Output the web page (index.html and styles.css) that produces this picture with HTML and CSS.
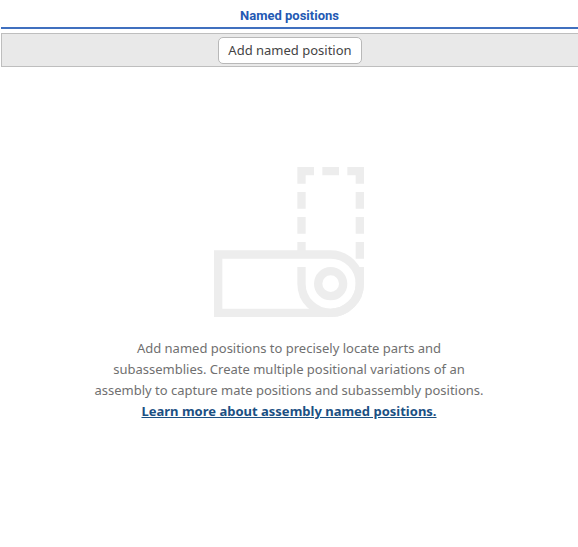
FILE: index.html
```html
<!DOCTYPE html>
<html lang="en">
<head>
<meta charset="utf-8">
<meta name="viewport" content="width=device-width, initial-scale=1">
<title>Named positions</title>
<link rel="stylesheet" href="styles.css">
</head>
<body>
<main class="panel">
  <h1 class="panel-title">Named positions</h1>
  <div class="toolbar">
    <button type="button" class="add-button">Add named position</button>
  </div>
  <section class="empty-state">
    <svg class="empty-icon" viewBox="0 0 18 18" fill="none" stroke="currentColor" aria-hidden="true">
      <path d="M10.5 2V.5H12M13 .5h2M16 .5h1.500V2M10.500 3v2M10.500 6v2M10.500 9v1.500M17.500 3v2M17.500 6v2M17.500 9v2"/>
      <path d="M14 10.500H.5v7H14a3.500 3.500 0 0 0 0-7z"/>
      <path d="M10.500 12v2a3.500 3.500 0 0 0 7 0v-2"/>
      <circle cx="14" cy="14" r="1.500"/>
    </svg>
    <p class="empty-text">Add named positions to precisely locate parts and subassemblies. Create multiple positional variations of an assembly to capture mate positions and subassembly positions. <a class="learn-link" href="#">Learn more about assembly named positions.</a></p>
  </section>
</main>
</body>
</html>
```
FILE: styles.css
```css
body {
  margin: 0;
  background: #fff;
  font-family: "Noto Sans", "Liberation Sans", sans-serif;
}

.panel-title {
  margin: 0 0 4px 1px;
  padding: 7px 0 3px;
  border-bottom: 2px solid #4070bf;
  color: #2459b3;
  font-family: Roboto, "Liberation Sans", sans-serif;
  font-size: 13px;
  line-height: 17px;
  font-weight: 700;
  text-align: center;
}

.toolbar {
  display: flex;
  justify-content: center;
  margin-left: 1px;
  padding: 3px 0 2px;
  border: 1px solid #bebebe;
  border-right: 0;
  background: #e9e9e9;
}

.add-button {
  padding: 4px 9px;
  border: 1px solid #b8b8b8;
  border-radius: 5px;
  background: #fff;
  color: #444;
  font: inherit;
  font-size: 13px;
  line-height: 17px;
}

.empty-state {
  display: flex;
  flex-direction: column;
  align-items: center;
  padding: 100px 16px 16px;
}

.empty-icon {
  width: 150px;
  height: 150px;
  color: #ededed;
}

.empty-text {
  max-width: 400px;
  margin: 21px 0 0;
  color: #707070;
  font-size: 13px;
  line-height: 21px;
  text-align: center;
}

.learn-link {
  color: #1b5083;
  font-weight: 700;
}
```
